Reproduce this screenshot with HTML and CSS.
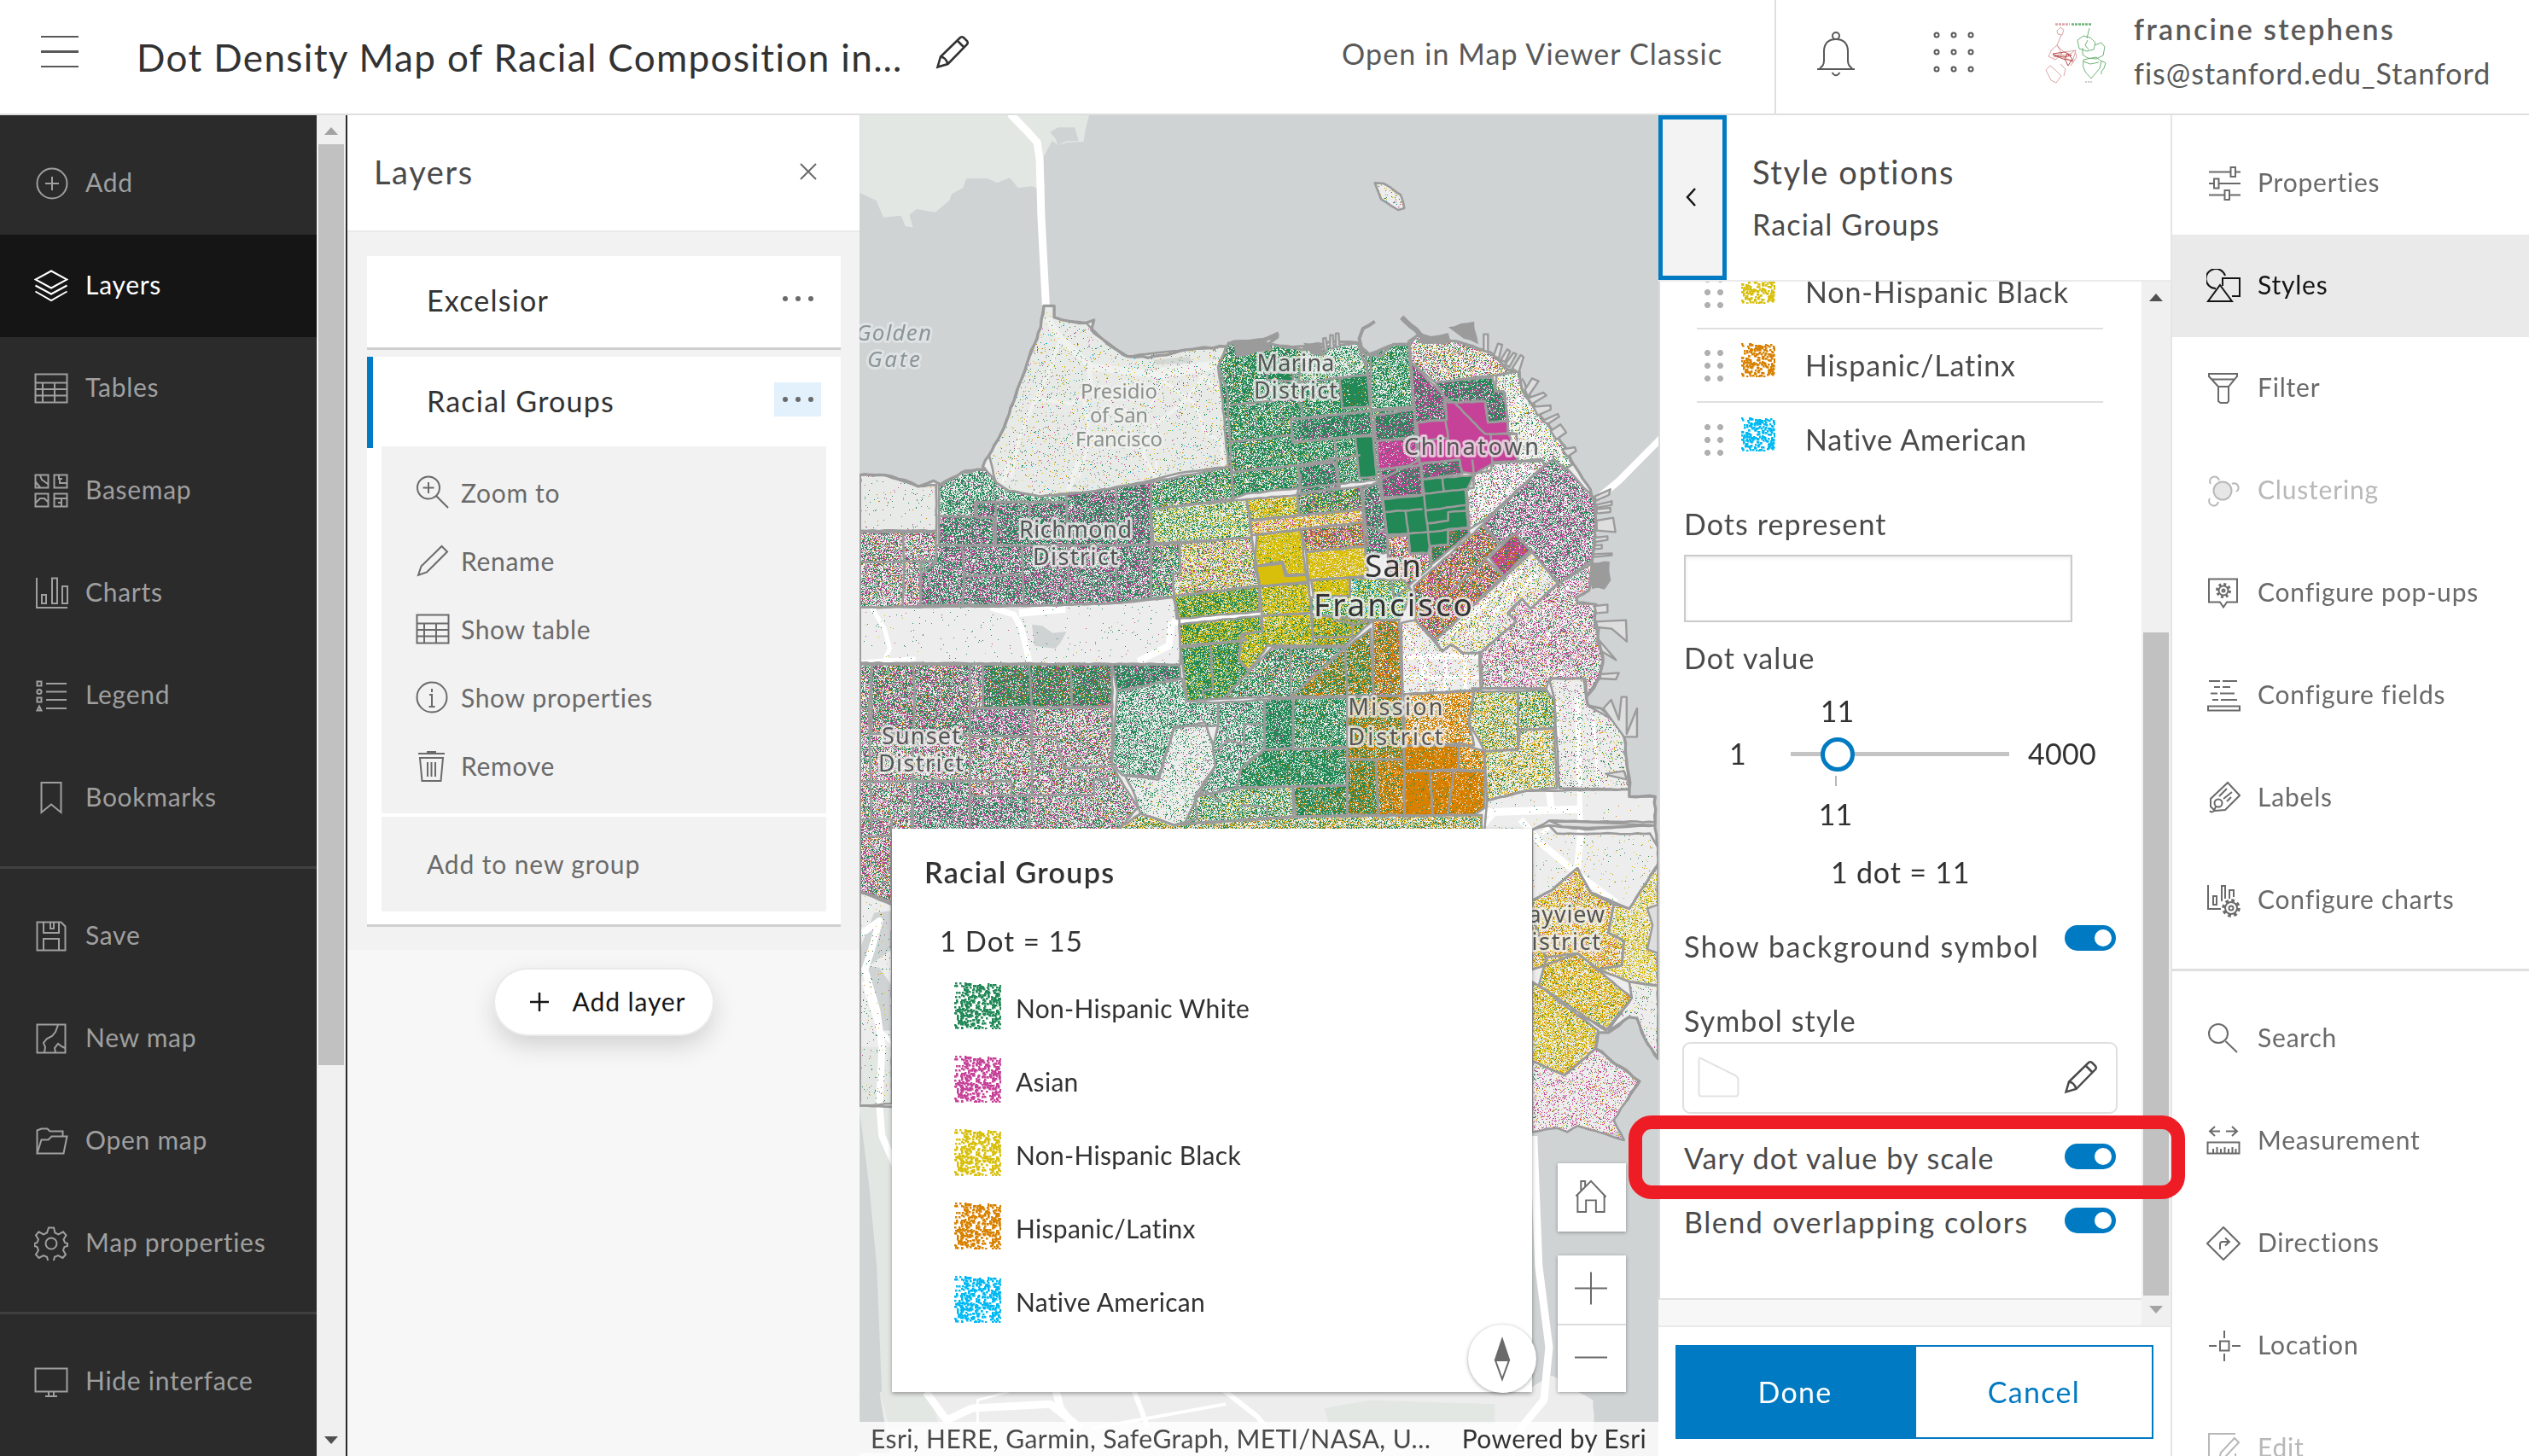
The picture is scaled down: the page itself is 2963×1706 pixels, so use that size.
FILE: index.html
```html
<!DOCTYPE html>
<html lang="en">
<head>
<meta charset="utf-8">
<title>Dot Density Map of Racial Composition in San Francisco</title>
<link rel="stylesheet" href="styles.css">
</head>
<body>
<svg class="sprite" aria-hidden="true">
  <symbol id="add" viewBox="0 0 40 40"><circle cx="21" cy="20" r="17.5"/><path d="M21 12v16M13 20h16"/></symbol>
  <symbol id="layers" viewBox="0 0 40 40"><path d="M20 2.500L38.500 12.500 20 22.500 1.500 12.500z M1.500 19.500L20 29.500 38.500 19.500 M1.500 26.500L20 37 38.500 26.500"/></symbol>
  <symbol id="table" viewBox="0 0 40 40"><path d="M1.500 3.500h37v33h-37zM1.500 13.500h37M1.500 21h37M1.500 28.500h37M10 13.500v23M24 13.500v23"/></symbol>
  <symbol id="basemap" viewBox="0 0 40 40"><path d="M1.500 1.500h15v15h-15zM23.500 1.500h15v15h-15zM1.500 23.500h15v15h-15zM23.500 23.500h15v15h-15zM7 2l2 5 7 5M2 10l5 6M29 2v4h4M38 11h-8V7M2 34l5-5h5l5 5M24 29h14M32 29v9M28 34h4"/></symbol>
  <symbol id="charts" viewBox="0 0 40 40"><path d="M3 2v35h36M9 22h5v10H9zM21 2.500h6V32h-6zM33 12h6v20h-6z"/></symbol>
  <symbol id="legend" viewBox="0 0 40 40"><path d="M3.500 3.500h5v5h-5zM3.500 22.500h5v5h-5zM14 6h24M14 15.500h24M14 25h24M14 35h24M6 32.500l2.500 5h-5z"/><circle cx="6" cy="15.500" r="2.600"/></symbol>
  <symbol id="bookmark" viewBox="0 0 40 40"><path d="M8.500 2h23v35L20 27.500 8.500 37z"/></symbol>
  <symbol id="save" viewBox="0 0 40 40"><path d="M3.500 3.500h28l5 5v28h-33zM11 4v12h18V4M23 4v7h-4V4M11 36V23h18v13"/></symbol>
  <symbol id="newmap" viewBox="0 0 40 40"><path d="M3.500 3.500h33v33h-33zM28 4l-3 8-4 5-6 3-4 5 2 5-1 6M25 36l-1-5 4-5 4 3 4 2"/></symbol>
  <symbol id="folder" viewBox="0 0 40 40"><path d="M3.500 34.500V7.500l5-2h7l3 3h15v6M3.500 34.500l5-16h8l4-4h18l-4 20z"/></symbol>
  <symbol id="gear" viewBox="0 0 40 40"><path d="M17 1.500h6l1.500 6 4 1.800 5.500-3 3.500 4-3 5 1.500 3.700 3 1v3l-3.500 1-1.500 4 3 5-3.500 4-5.500-3-4 1.800-1.500 5.700h-6l-1.500-5.700-4-1.800-5.500 3-3.500-4 3-5-1.500-4-3-1v-3l3-1 1.500-3.700-3-5 3.500-4 5.500 3 4-1.800z"/><circle cx="20" cy="20" r="6.500"/></symbol>
  <symbol id="monitor" viewBox="0 0 40 40"><path d="M1.500 4.500h37v27h-37zM17 32v4M23 32v4M13 37h14"/></symbol>
  <symbol id="zoomto" viewBox="0 0 40 40"><circle cx="15" cy="14.500" r="13"/><path d="M15 8v13M8.500 14.500h13M24 24l14 14"/></symbol>
  <symbol id="pencil" viewBox="0 0 40 40"><path d="M3 37l3.500-10.500L30.500 3l6.500 6.500L13 33.500z"/></symbol>
  <symbol id="pencil2" viewBox="0 0 40 40"><path d="M2.500 37.500l3.500-12L29 3q2-1.500 4 0l4 4q1.500 2 0 4L14.500 34zM25.500 6.500l8 8M6 25.500q6 .5 8.500 8.500"/></symbol>
  <symbol id="info" viewBox="0 0 40 40"><circle cx="19" cy="20" r="17.500"/><path d="M19 10v4M16 17h3v14M15.500 31h7"/></symbol>
  <symbol id="trash" viewBox="0 0 40 40"><path d="M3 6h31M13 4h11M5 11h27l-2.500 27h-22zM14 16v17M18.500 16v17M23 16v17"/></symbol>
  <symbol id="sliders" viewBox="0 0 40 40"><path d="M3 6.500h25M35 6.500h5M3 20h5M15 20h25M3 33.500h18M27 33.500h13M28.500 1h5.500v11h-5.500zM9 14.500h5.500v11H9zM21.500 28h5.500v11h-5.500z"/></symbol>
  <symbol id="styles" viewBox="0 0 40 40"><path d="M11 23a11.500 11.500 0 1 1 11-15M19 20v-9h20v21h-9M16 19l14 19H2z"/></symbol>
  <symbol id="filter" viewBox="0 0 40 40"><path d="M3 3h33v3L26 18v17l-1.500 2h-8L14 35V18L3 6zM6 9.500h27M13 18h13"/></symbol>
  <symbol id="cluster" viewBox="0 0 40 40"><circle cx="19" cy="20" r="10.500" class="soft"/><path d="M5 12a5.500 5.500 0 1 1 10-4M30 12a5 5 0 1 1 5 9M4 29a5.500 5.500 0 1 0 10 4"/></symbol>
  <symbol id="popup" viewBox="0 0 40 40"><path d="M3 3.500h33v27H24l-4 6-4-6H3z"/><circle cx="20" cy="17" r="7.500" stroke-dasharray="3 2.890" stroke-width="3"/><circle cx="20" cy="17" r="5.500"/><circle cx="20" cy="17" r="1.500"/></symbol>
  <symbol id="fields" viewBox="0 0 40 40"><path d="M3 3h13M19 3h17M9 10h7M19 10h9M5 17.500h8M16 17.500h17M7 25h7M17 25h19M2 32.500h37v5H2z"/></symbol>
  <symbol id="label" viewBox="0 0 40 40"><path d="M25 2l14 15-17 17-12 1L5 30V21zM15 18l9-9M20 21l10-8M24 24l5-5"/><circle cx="14" cy="26" r="4.500"/><path d="M11 30l-2 5q-3 3-5 0"/></symbol>
  <symbol id="cfgcharts" viewBox="0 0 40 40"><path d="M2 2v28h15M8 15h4v10H8zM18 21V3h4v15M27 18V8h5v8"/><circle cx="29" cy="29" r="9" stroke-dasharray="3.700 3.370" stroke-width="3.500"/><circle cx="29" cy="29" r="7"/><circle cx="29" cy="29" r="2.500"/></symbol>
  <symbol id="search" viewBox="0 0 40 40"><circle cx="14" cy="14" r="11"/><path d="M22.500 23L36 36"/></symbol>
  <symbol id="measure" viewBox="0 0 40 40"><path d="M4 8.500h12M23 8.500h12M10 3L4 8.500 10 14M30 3l6 5.500-6 5.500M1.500 21.500h37v13h-37zM8 34v-5M12.500 34v-7M17 34v-5M21.500 34v-7M26 34v-5M30.500 34v-7M34.500 34v-5"/></symbol>
  <symbol id="directions" viewBox="0 0 40 40"><path d="M20 1l19 19-19 19L1 20zM16 27v-6q0-3 3-3h7M22 13.500l5 4.500-5 4.500"/></symbol>
  <symbol id="location" viewBox="0 0 40 40"><path d="M21 2v9M21 29v9M3 20h9M30 20h10M16 14.500h10.500v11H16z"/></symbol>
  <symbol id="edit" viewBox="0 0 40 40"><path d="M34 3H3v34h31V26M15 33l2-8L33 8l5 5-16 17z"/></symbol>
</svg>

<header class="topbar">
  <div class="burger"><i></i><i></i><i></i></div>
  <h1 class="title">Dot Density Map of Racial Composition in…</h1>
  <svg class="icon title-edit"><use href="#pencil2"/></svg>
  <a class="classic">Open in Map Viewer Classic</a>
  <div class="account">
    <svg class="bell" viewBox="0 0 46 53"><circle cx="23" cy="5" r="4"/><path d="M1 44h44M4 43q5-3 5-9V22Q10 9 23 9t14 13v12q0 6 5 9M18.500 48q4.500 6.500 9 0"/></svg>
    <svg class="apps" viewBox="0 0 48 48"><g><circle cx="4" cy="4" r="2.500"/><circle cx="24" cy="4" r="2.500"/><circle cx="44" cy="4" r="2.500"/><circle cx="4" cy="24" r="2.500"/><circle cx="24" cy="24" r="2.500"/><circle cx="44" cy="24" r="2.500"/><circle cx="4" cy="44" r="2.500"/><circle cx="24" cy="44" r="2.500"/><circle cx="44" cy="44" r="2.500"/></g></svg>
    <svg class="avatar" viewBox="0 0 72 74">
      <path class="r" d="M12 3.500h17" stroke-dasharray="3 1" stroke-width="2.500"/><path class="g" d="M31 3.500h24" stroke-dasharray="3 1" stroke-width="2.500"/>
      <path class="r" d="M14 11l4-4 4 3-2 6-5-1zM19 16l-5 12-6 5-4 8 8 4 8-7-6-10 8 8 14-2-4 14-14-10-8 4 20-4 5-4 2 8-7 10M6 52l-5 5 6 12 6 3 6-8-8-8zM18 50l6 6-2 8"/>
      <path class="r hot" d="M9 38l14-2 8 4-10 2-12-3 12 5 12 2M26 38l6 6-5 8-4-8z"/>
      <path class="g" d="M52 8l-3 12M38 22l7-5 8 2 6 6-2 8-8 2-9-3zM50 22l-3 6 4 5M58 28l8-3 4 5-2 10-8 4-10-1-6-4v-8M45 45q-2 8 2 14l7 8 10-12 2-8-6-5zM66 46l5 3-2 6-3 4v3M45 47l8 3 10-2"/>
      <path d="M47 71h9" stroke="#999" stroke-dasharray="2 1"/>
    </svg>
    <div class="who"><b>francine stephens</b><span>fis@stanford.edu_Stanford</span></div>
  </div>
</header>

<div class="work">
  <nav class="rail rail-dark">
    <ul>
      <li><svg class="icon"><use href="#add"/></svg>Add</li>
      <li class="on"><svg class="icon"><use href="#layers"/></svg>Layers</li>
      <li><svg class="icon"><use href="#table"/></svg>Tables</li>
      <li><svg class="icon"><use href="#basemap"/></svg>Basemap</li>
      <li><svg class="icon"><use href="#charts"/></svg>Charts</li>
      <li><svg class="icon"><use href="#legend"/></svg>Legend</li>
      <li><svg class="icon"><use href="#bookmark"/></svg>Bookmarks</li>
    </ul>
    <ul>
      <li><svg class="icon"><use href="#save"/></svg>Save</li>
      <li><svg class="icon"><use href="#newmap"/></svg>New map</li>
      <li><svg class="icon"><use href="#folder"/></svg>Open map</li>
      <li><svg class="icon"><use href="#gear"/></svg>Map properties</li>
    </ul>
    <ul>
      <li><svg class="icon"><use href="#monitor"/></svg>Hide interface</li>
    </ul>
  </nav>
  <div class="scroll scroll-nav"><i class="up dim"></i><b></b><i class="down"></i></div>

  <section class="layers">
    <header><h2>Layers</h2><svg class="close" viewBox="0 0 20 20"><path d="M1 1l18 18M19 1L1 19"/></svg></header>
    <div class="layer-list">
      <article class="card">
        <div class="card-row"><span>Excelsior</span><span class="more"><i></i><i></i><i></i></span></div>
      </article>
      <article class="card">
        <div class="card-row picked"><span>Racial Groups</span><span class="more lit"><i></i><i></i><i></i></span></div>
        <ul class="menu">
          <li><svg class="icon"><use href="#zoomto"/></svg>Zoom to</li>
          <li><svg class="icon"><use href="#pencil"/></svg>Rename</li>
          <li><svg class="icon"><use href="#table"/></svg>Show table</li>
          <li><svg class="icon"><use href="#info"/></svg>Show properties</li>
          <li><svg class="icon"><use href="#trash"/></svg>Remove</li>
        </ul>
        <div class="regroup">Add to new group</div>
      </article>
    </div>
    <button class="add-layer"><svg viewBox="0 0 24 24"><path d="M12 1v22M1 12h22"/></svg>Add layer</button>
  </section>

  <main class="map">
    <canvas id="map" width="936" height="1571"></canvas>
    <svg class="places" viewBox="1007 135 936 1571">
      <g class="sea"><text x="1047" y="399" textLength="88">Golden</text><text x="1047" y="430" textLength="62">Gate</text></g>
      <g class="park"><text x="1311" y="467" textLength="90">Presidio</text><text x="1311" y="495" textLength="68">of San</text><text x="1311" y="523" textLength="102">Francisco</text></g>
      <g class="hood">
        <text x="1518" y="435" textLength="91">Marina</text><text x="1518" y="467" textLength="98">District</text>
        <text x="1724" y="533" textLength="158">Chinatown</text>
        <text x="1260" y="630" textLength="132">Richmond</text><text x="1260" y="662" textLength="100">District</text>
        <text x="1635" y="838" textLength="111">Mission</text><text x="1635" y="873" textLength="111">District</text>
        <text x="1079" y="872" textLength="92">Sunset</text><text x="1079" y="904" textLength="100">District</text>
        <text x="1826" y="1081" textLength="108">Bayview</text><text x="1824" y="1113" textLength="102">District</text>
      </g>
      <g class="city"><text x="1632" y="676" textLength="66">San</text><text x="1632" y="722" textLength="186">Francisco</text></g>
    </svg>
    <aside class="legend">
      <h3>Racial Groups</h3>
      <p>1 Dot = 15</p>
      <ul>
        <li><canvas class="swatch" width="55" height="55" data-group="g"></canvas>Non-Hispanic White</li>
        <li><canvas class="swatch" width="55" height="55" data-group="p"></canvas>Asian</li>
        <li><canvas class="swatch" width="55" height="55" data-group="y"></canvas>Non-Hispanic Black</li>
        <li><canvas class="swatch" width="55" height="55" data-group="o"></canvas>Hispanic/Latinx</li>
        <li><canvas class="swatch" width="55" height="55" data-group="b"></canvas>Native American</li>
      </ul>
    </aside>
    <div class="compass"><svg viewBox="0 0 20 54"><path d="M10 1l9 27H1z" fill="#6a6a6a"/><path d="M2 29h16l-8 22z" fill="#fff" stroke="#6a6a6a" stroke-width="2"/></svg></div>
    <div class="tools">
      <button><svg viewBox="0 0 40 42"><path d="M2 21L20 3l18 19M4 20v20h10V26h12v14h10V20M8 14V3h5v7"/></svg></button>
      <div class="zoom"><button><svg viewBox="0 0 40 40"><path d="M20 1v38M1 20h38"/></svg></button><button><svg viewBox="0 0 40 40"><path d="M1 20h38"/></svg></button></div>
    </div>
    <footer class="credits"><span>Esri, HERE, Garmin, SafeGraph, METI/NASA, U…</span><span>Powered by Esri</span></footer>
  </main>

  <section class="options">
    <header>
      <button class="back"><svg viewBox="0 0 14 22"><path d="M12 1L3 11l9 10"/></svg></button>
      <div class="heading"><h2>Style options</h2><p>Racial Groups</p></div>
    </header>
    <div class="options-main">
      <div class="form">
        <ul class="groups">
          <li><span class="grip"></span><canvas class="swatch" width="40" height="40" data-group="y"></canvas>Non-Hispanic Black</li>
          <li><span class="grip"></span><canvas class="swatch" width="40" height="40" data-group="o"></canvas>Hispanic/Latinx</li>
          <li><span class="grip"></span><canvas class="swatch" width="40" height="40" data-group="b"></canvas>Native American</li>
        </ul>
        <label class="dots-label">Dots represent</label>
        <div class="input"></div>
        <label class="value-label">Dot value</label>
        <div class="slider">
          <div class="cur">11</div>
          <div class="track-row"><span class="min">1</span><span class="track"><i></i></span><span class="max">4000</span></div>
          <div class="tick"></div>
          <div class="cur low">11</div>
          <div class="equals">1 dot = 11</div>
        </div>
        <div class="switch-row bg"><span>Show background symbol</span><i class="switch"></i></div>
        <label class="symbol-label">Symbol style</label>
        <div class="symbol">
          <svg class="shape" viewBox="0 0 49 48"><path d="M1.500 4q0-4 3-1.500L44 22q3.500 2 3.500 5v16q0 3.500-3 3.500h-40q-3 0-3-3.500z"/></svg>
          <svg class="icon"><use href="#pencil2"/></svg>
        </div>
        <div class="switch-row vary"><span>Vary dot value by scale</span><i class="switch"></i></div>
        <div class="switch-row blend"><span>Blend overlapping colors</span><i class="switch"></i></div>
      </div>
      <div class="scroll scroll-form"><i class="up"></i><b></b><i class="down dim"></i></div>
    </div>
    <footer><button class="done">Done</button><button class="cancel">Cancel</button></footer>
  </section>

  <nav class="rail rail-light">
    <ul>
      <li><svg class="icon"><use href="#sliders"/></svg>Properties</li>
      <li class="on"><svg class="icon"><use href="#styles"/></svg>Styles</li>
      <li><svg class="icon"><use href="#filter"/></svg>Filter</li>
      <li class="off"><svg class="icon"><use href="#cluster"/></svg>Clustering</li>
      <li><svg class="icon"><use href="#popup"/></svg>Configure pop-ups</li>
      <li><svg class="icon"><use href="#fields"/></svg>Configure fields</li>
      <li><svg class="icon"><use href="#label"/></svg>Labels</li>
      <li><svg class="icon"><use href="#cfgcharts"/></svg>Configure charts</li>
    </ul>
    <ul>
      <li><svg class="icon"><use href="#search"/></svg>Search</li>
      <li><svg class="icon"><use href="#measure"/></svg>Measurement</li>
      <li><svg class="icon"><use href="#directions"/></svg>Directions</li>
      <li><svg class="icon"><use href="#location"/></svg>Location</li>
      <li class="off"><svg class="icon"><use href="#edit"/></svg>Edit</li>
    </ul>
  </nav>
</div>
<div class="callout"></div>
<script src="map.js"></script>
</body>
</html>
```
FILE: styles.css
```css
* { box-sizing: border-box; margin: 0; padding: 0; }
body { width: 2963px; height: 1706px; overflow: hidden; position: relative; background: #fff; color: #4a4a4a; font: 400 30px/40px Lato, "Open Sans", sans-serif; letter-spacing: .72px; display: flex; flex-direction: column; }
ul { list-style: none; }
button { font: inherit; letter-spacing: inherit; color: inherit; border: 0; background: #fff; }
svg { fill: none; stroke: currentColor; stroke-width: 2; display: block; flex: none; }
canvas { display: block; flex: none; }
.sprite { position: absolute; width: 0; height: 0; }
.icon { width: 40px; height: 40px; }
.soft { fill: #e6e6e6; }

/* top bar */
.topbar { flex: none; height: 135px; border-bottom: 2px solid #dfdfdf; display: flex; align-items: center; }
.burger { width: 44px; margin: -12px 0 0 48px; display: flex; flex-direction: column; gap: 15px; }
.burger i { height: 2.5px; background: #595959; }
.title { width: 896px; margin: 1px 0 0 68px; font-size: 44px; font-weight: 400; line-height: 60px; letter-spacing: 1.38px; color: #323232; white-space: nowrap; }
.title-edit { margin: -12px 0 0 40px; color: #323232; stroke-width: 2.6; }
.classic { width: 507px; margin: -7px 0 0 436px; font-size: 34px; letter-spacing: 1.12px; color: #595959; white-space: nowrap; }
.account { height: 133px; flex: 1; border-left: 2px solid #dfdfdf; display: flex; align-items: center; color: #595959; }
.bell { width: 46px; height: 53px; margin: -7px 0 0 47px; }
.apps { width: 48px; height: 48px; margin: -12px 0 0 91px; }
.avatar { width: 72px; height: 74px; margin: -9px 0 0 83px; stroke-width: 1; }
.avatar .r { stroke: #dba3a3; } .avatar .hot { stroke: #b84848; } .avatar .g { stroke: #6db477; }
.who { margin: -14px 0 0 32px; display: flex; flex-direction: column; gap: 9px; font-size: 34px; line-height: 43px; letter-spacing: .99px; white-space: nowrap; }
.who b { letter-spacing: 2.35px; font-weight: 600; }

.work { flex: 1; min-height: 0; display: flex; }

/* tool rails */
.rail { flex: none; overflow: hidden; }
.rail ul { padding: 20px 0; }
.rail ul + ul { border-top: 3px solid #3f3f3f; padding-top: 19px; }
.rail li { height: 120px; padding-left: 40px; display: flex; align-items: center; gap: 20px; white-space: nowrap; padding-bottom: 4px; }
.rail .icon { margin-top: 3px; }
.rail-dark { width: 371px; background: #2b2b2b; color: #9f9f9f; }
.rail-dark .on { background: #151515; color: #fff; }
.rail-light { width: 420px; border-left: 2px solid #e5e5e5; color: #6a6a6a; letter-spacing: .8px; }
.rail-light ul + ul { border-color: #dfdfdf; }
.rail-light .on { background: #eaeaea; color: #151515; }
.rail-light .off { color: #b8b8b8; }

/* scrollbars */
.scroll { flex: none; width: 34px; background: #f0f0f0; display: flex; flex-direction: column; align-items: center; }
.scroll i { width: 0; height: 0; border: 8px solid transparent; }
.scroll .up { border-top: 0; border-bottom: 9px solid #505050; }
.scroll .down { border-bottom: 0; border-top: 9px solid #505050; }
.scroll .up.dim { border-bottom-color: #a3a3a3; }
.scroll .down.dim { border-top-color: #a3a3a3; }
.scroll b { width: 30px; background: #c1c1c1; }
.scroll-nav { width: 36px; border-right: 2px solid #2b2b2b; padding: 14px 0; }
.scroll-nav b { height: 1079px; margin: 11px 0 auto; }
.scroll-form { height: 1223px; padding: 14px 0 14px; }
.scroll-form b { height: 777px; margin: auto 0 12px; }

/* layers panel */
.layers { flex: none; width: 600px; background: #f7f7f7; display: flex; flex-direction: column; align-items: center; }
.layers > header { align-self: stretch; height: 137px; background: #fff; border-bottom: 2px solid #eaeaea; display: flex; align-items: center; justify-content: space-between; padding: 0 50px 3px 31px; }
h2 { font-size: 38px; font-weight: 400; letter-spacing: 1.6px; color: #4a4a4a; line-height: 48px; }
.close { width: 20px; height: 20px; color: #6a6a6a; }
.layer-list { align-self: stretch; height: 841px; padding: 28px 22px 0 23px; background: #f2f2f2; display: flex; flex-direction: column; gap: 8px; }
.card { background: #fff; border-bottom: 3px solid #cfcfcf; padding-bottom: 15px; }
.card:first-child { padding: 0; }
.card-row { height: 107px; padding: 0 23px 4px 70px; display: flex; align-items: center; justify-content: space-between; font-size: 34px; letter-spacing: 1.2px; color: #323232; }
.picked { border-left: 7px solid #007ac2; padding-left: 63px; }
.more { width: 55px; height: 40px; display: flex; align-items: center; justify-content: center; gap: 9px; margin-top: -4px; }
.more i { width: 6px; height: 6px; border-radius: 50%; background: #6a6a6a; }
.lit { background: #e2f1fb; }
.menu, .regroup { width: 521px; margin-left: 17px; background: #f2f2f2; color: #6a6a6a; }
.menu { height: 430px; margin-top: -2px; padding-top: 14px; }
.menu li { height: 80px; padding-left: 40px; display: flex; align-items: center; gap: 13px; letter-spacing: .68px; padding-bottom: 1px; }
.regroup { height: 111px; margin-top: 4px; padding-left: 53px; line-height: 110px; letter-spacing: .87px; }
.add-layer { width: 255px; height: 76px; margin-top: 23px; border-radius: 38px; color: #151515; box-shadow: 0 0 0 2px #eaeaea, 0 12px 30px rgba(0,0,0,.16); display: flex; align-items: center; justify-content: center; gap: 27px; letter-spacing: .9px; padding: 0 0 3px 9px; }
.add-layer svg { width: 24px; height: 24px; margin-top: 3px; stroke-width: 2.500; }

/* map */
.map { flex: none; width: 936px; position: relative; overflow: hidden; background: #cfd3d4; }
.places { position: absolute; inset: 0; width: 936px; height: 1571px; font-family: "Noto Sans", sans-serif; text-anchor: middle; letter-spacing: 0; }
.places text { paint-order: stroke; stroke-linejoin: round; stroke: rgba(240,240,240,.75); stroke-width: 6px; }
.sea { font-size: 26px; font-style: italic; fill: #8b9599; }
.sea text { stroke: #dfe2e3; }
.park { font-size: 24px; fill: #8a908a; }
.hood { font-size: 27px; fill: #555; }
.city { font-size: 37px; fill: #333; }
.legend { position: absolute; left: 38px; top: 836px; width: 750px; height: 660px; background: #fff; box-shadow: 0 2px 5px rgba(0,0,0,.35); padding: 31px 38px; color: #323232; }
.legend h3 { font-size: 34px; font-weight: 600; letter-spacing: 1.35px; }
.legend p { margin: 40px 0 29px 18px; font-size: 33px; letter-spacing: 1.1px; }
.legend ul { padding-left: 35px; }
.legend li { height: 55px; margin-bottom: 31px; display: flex; gap: 17px; letter-spacing: .3px; line-height: 61px; }
.compass { position: absolute; left: 713px; top: 1417px; width: 80px; height: 80px; border-radius: 50%; background: #fff; box-shadow: 0 1px 4px rgba(0,0,0,.35); display: flex; align-items: center; justify-content: center; }
.compass svg { width: 20px; height: 54px; stroke: none; }
.tools { position: absolute; left: 818px; top: 1228px; width: 80px; display: flex; flex-direction: column; gap: 28px; color: #6a6a6a; }
.tools button { width: 80px; height: 80px; display: flex; align-items: center; justify-content: center; padding: 0 2px 3px 0; }
.tools > button, .zoom { box-shadow: 0 1px 4px rgba(0,0,0,.35); }
.zoom button + button { border-top: 2px solid #dcdcdc; }
.tools svg { width: 40px; height: 41px; }
.credits { position: absolute; left: 0; bottom: 0; width: 936px; height: 40px; padding: 0 14px 0 13px; background: rgba(255,255,255,.8); display: flex; justify-content: space-between; color: #4a4a4a; letter-spacing: .4px; line-height: 39px; white-space: nowrap; }
.credits span + span { letter-spacing: .36px; color: #323232; }

/* style options */
.options { flex: none; width: 600px; display: flex; flex-direction: column; font-size: 34px; letter-spacing: 1.1px; }
.options > header { height: 195px; display: flex; border-bottom: 2px solid #eaeaea; }
.back { width: 80px; height: 193px; border: 5px solid #007ac2; background: #f3f3f3; display: flex; align-items: center; justify-content: center; color: #151515; }
.back svg { width: 14px; height: 22px; margin: -2px 0 0 -4px; stroke-width: 2.500; }
.heading { padding: 42px 0 0 30px; }
.heading p { margin-top: 18px; line-height: 40px; letter-spacing: 1.2px; }
.options-main { height: 1223px; display: flex; background: #f7f7f7; }
.form { width: 566px; height: 1193px; overflow: hidden; background: #fff; border-left: 2px solid #dadada; border-bottom: 2px solid #e2e2e2; display: flex; flex-direction: column; padding: 0 28px; }
.groups { margin: -30px 17px 0 15px; }
.groups li { height: 86px; display: flex; align-items: center; border-bottom: 2px solid #dfdfdf; letter-spacing: .88px; white-space: nowrap; }
.groups li:last-child { border-bottom: 0; }
.groups .swatch { margin: -13px 35px 0 19px; }
.grip { width: 28px; height: 44px; margin-left: 5px; background: radial-gradient(circle 3.800px, #b0b0b0 85%, transparent) 0 0 / 15px 15px; }
.form label, .form .input, .symbol { flex: none; }
.form label { height: 40px; }
.dots-label { margin-top: 36px; }
.input { width: 455px; height: 79px; margin-top: 16px; border: 2px solid #cacaca; box-shadow: inset 0 2px 4px rgba(0,0,0,.07); }
.value-label { margin-top: 22px; }
.slider { height: 252px; flex: none; color: #323232; padding-top: 22px; }
.cur { width: 359px; text-align: center; letter-spacing: 0; height: 40px; }
.track-row { height: 40px; margin-top: 10px; display: flex; align-items: center; letter-spacing: 0; }
.min { width: 72px; margin-left: 53px; }
.track { width: 256px; height: 5px; background: #c4c4c4; position: relative; }
.track i { position: absolute; left: 35px; top: -17px; width: 40px; height: 40px; border: 5px solid #007ac2; border-radius: 50%; background: #fff; }
.max { margin-left: 22px; letter-spacing: .3px; }
.tick { width: 2px; height: 12px; margin: 6px 0 13px 177px; background: #b8b8b8; }
.cur.low { width: 355px; }
.equals { margin: 28px 0 0 172px; letter-spacing: .8px; }
.switch-row { flex: none; height: 30px; width: 506px; display: flex; justify-content: space-between; white-space: nowrap; }
.switch { width: 60px; height: 30px; border-radius: 15px; background: #007ac2; }
.switch::after { content: ""; display: block; width: 20px; height: 20px; margin: 5px 0 0 35px; border-radius: 50%; background: #fff; }
.bg { margin-top: 41px; letter-spacing: 1.62px; } .bg span { margin-top: 5px; }
.symbol-label { margin-top: 62px; }
.symbol { width: 510px; height: 84px; margin: 5px 0 0 -2px; border: 2px solid #dfdfdf; border-radius: 9px; display: flex; align-items: center; justify-content: space-between; padding: 0 21px 2px 16px; }
.symbol .icon { stroke-width: 2.500; }
.shape { width: 49px; height: 48px; color: #e2e2e2; }
.vary { margin-top: 35px; letter-spacing: 1.08px; } .vary span { margin-top: -3px; }
.blend { margin-top: 45px; letter-spacing: 1.55px; } .blend span { margin-top: -3px; }
.options > footer { flex: 1; border-top: 2px solid #eaeaea; padding: 21px 20px 20px; display: flex; }
.options > footer button { flex: 1; border: 2px solid #007ac2; color: #007ac2; height: 110px; letter-spacing: 1.3px; }
.options > footer .done { background: #007ac2; color: #fff; }

.callout { position: absolute; left: 1908px; top: 1307px; width: 652px; height: 98px; border: 16px solid #ee1c24; border-radius: 27px; }
```
FILE: map.js
```js
// Colours of the five groups, keyed by the letter used in the tract mixes.
const GROUP = { g: [33, 136, 86], p: [197, 66, 152], y: [216, 191, 12], o: [216, 129, 0], b: [0, 185, 242] };

// The city was digitised on four sheets; each one has its own origin and scale.
const SHEET = {
  n: (x, y) => [1000 + x * 0.6059, 120 + y / 3],
  m: (x, y) => [1000 + x * 0.6059, 540 + y / 3],
  s: (x, y) => [1000 + x * 0.6059, 960 + y * 0.4758],
  d: (x, y) => [1500 + x / 3, 380 + y / 3]
};

let seed = 7;
function rnd() {
  seed = (seed + 0x6d2b79f5) | 0;
  let t = Math.imul(seed ^ (seed >>> 15), 1 | seed);
  t = (t + Math.imul(t ^ (t >>> 7), 61 | t)) ^ t;
  return ((t ^ (t >>> 14)) >>> 0) / 4294967296;
}

function trace(text, close, rough) {
  const path = new Path2D();
  let sheet = 'n', prev = null;
  for (const word of text.trim().split(/\s+/)) {
    if (/^[nmsd]$/.test(word)) { sheet = word; continue; }
    const [a, b] = word.split(',').map(Number);
    let [x, y] = SHEET[sheet](a, b);
    x -= 1007; y -= 135;
    if (!prev) path.moveTo(x, y);
    else {
      if (rough) {
        const n = Math.floor(Math.hypot(x - prev[0], y - prev[1]) / 7);
        for (let i = 1; i < n; i++) {
          path.lineTo(prev[0] + (x - prev[0]) * i / n + (rnd() - .5) * rough, prev[1] + (y - prev[1]) * i / n + (rnd() - .5) * rough);
        }
      }
      path.lineTo(x, y);
    }
    prev = [x, y];
  }
  if (close) path.closePath();
  return path;
}

const canvas = document.getElementById('map');
const ctx = canvas.getContext('2d');
const W = canvas.width, H = canvas.height;
const fill = (t, c, rough) => { ctx.fillStyle = c; ctx.fill(trace(t, true, rough)); };
const line = (t, c, w, rough) => { ctx.strokeStyle = c; ctx.lineWidth = w; ctx.stroke(trace(t, false, rough)); };
ctx.lineJoin = 'round';

const WATER = '#cfd3d4', LAND = '#ededed', PARK = '#e3e7e4', EDGE = '#9b9b9b';
ctx.fillStyle = WATER;
ctx.fillRect(0, 0, W, H);

// Marin headlands and the bridges
fill('n 12,40 456,40 448,100 445,138 415,140 395,150 384,135 365,200 370,310 345,295 318,300 302,265 278,282 258,267 218,268 212,300 190,322 185,345 158,386 122,375 108,395 115,440 100,435 92,398 58,404 52,380 44,345 12,318', PARK);
fill('n 380,105 395,88 428,88 435,135 412,136 395,150 390,125', WATER);
line('n 303,40 335,100 355,140 360,200 363,400 372,715', '#fff', 9);
line('n 1570,1165 1480,1330 m 1440,130', '#fff', 8);

const COAST = 'm 12,50 60,50 100,68 125,90 155,70 170,85 210,40 255,30 n 250,1280 262,1240 285,1165 310,1050 335,920 350,850 362,790 368,715 388,715 388,755 420,770 450,775 465,765 460,800 480,830 500,860 530,893 570,898 640,870 720,858 735,840 820,825 800,850 860,858 930,840 975,845 990,888 1020,892 1045,850 1075,850 d 480,40 620,60 740,100 800,160 840,165 850,230 890,290 940,350 1000,430 1020,480 1090,580 1105,620 1110,700 1100,800 1095,870 1085,935 1040,960 1045,978 1110,985 1105,1040 1120,1060 1115,1110 1135,1180 1125,1240 1075,1310 m 1420,860 1445,870 1470,910 1490,970 1495,1050 1500,1110 1500,1180 1550,1180 1550,1270 s 1556,70 1556,590 1530,540 1515,490 1500,487 1460,525 1440,525 1435,565 1520,645 1470,740 1490,790 1400,755 1380,770 1360,760 1312,770 1310,1400 1350,1370 1430,1430 1430,1570 12,1570';
const coastSeed = seed;
fill(COAST, LAND, 2.5);
fill('s 1312,771 1492,771 1492,1370 1345,1370 1330,1100', WATER);
fill('s 40,230 74,225 74,320 20,370 12,360 12,320', WATER);
fill('s 20,360 50,365 74,410 74,520 55,520 40,430', WATER);
fill('s 12,560 74,560 74,1420 12,1420', PARK);
fill('s 12,720 30,900 45,1100 55,1420 12,1420', WATER);
fill('s 12,1410 50,1410 70,1560 12,1560', WATER);
fill('s 50,1410 145,1410 165,1490 70,1500', PARK);
fill('s 910,1450 1000,1430 1240,1440 1240,1490 920,1490', PARK);
fill('n 1008,283 1025,285 1058,325 1065,372 1053,378 1020,340', LAND);

// Streets below the dots
const STREETS = [
  ['s 12,285 50,250 35,320 22,370 45,470 55,560 50,700 55,780 90,880 120,1000', 8],
  ['s 20,400 50,520 74,550', 5], ['s 140,1410 180,1480 230,1450 380,1440 440,1500', 9], ['s 390,1400 400,1450 430,1500', 9],
  ['s 540,1400 570,1500', 6], ['s 710,1400 780,1470 800,1500', 6], ['s 300,1410 240,1430 240,1490', 3], ['s 460,1500 720,1440', 4],
  ['s 1315,780 1325,1100 1345,1300 1335,1430 1290,1500 1270,1565', 9], ['s 1290,0 1330,60 1415,150 1475,205', 8], ['s 1408,0 1400,120', 8],
  ['m 1220,1235 1400,1225', 9], ['m 1400,830 1405,1270', 6], ['m 1345,1160 1350,1230', 8], ['m 1240,1240 1215,1290', 5], ['m 1345,1290 1330,1310', 5],
  ['m 1360,850 1365,1140', 3], ['m 1430,900 1440,1140', 3],
  ['m 35,515 60,590 70,660 60,700', 5], ['m 265,515 310,540 325,590 340,705', 7], ['m 320,535 410,520', 9], ['m 615,565 610,650 550,705', 8], ['m 615,568 785,540', 8], ['m 12,708 120,695', 5],
  ['n 375,760 400,830 460,930 600,960 700,925', 8], ['n 400,830 375,960 350,1050 320,1180 305,1320', 4], ['n 350,1040 420,1060 445,1030 455,1150 450,1230 435,1320', 4], ['n 455,930 460,1020', 5],
  ['n 680,960 640,1050 600,1110 570,1150 560,1240 585,1320', 4], ['n 600,980 660,1060 680,1160 710,1190 715,1290', 4], ['n 590,940 720,910', 4], ['n 670,960 715,1020', 6], ['n 570,1080 600,970', 3],
  ['m 300,0 290,80', 5], ['m 435,0 415,105', 6], ['m 585,0 585,50', 3],
  ['d 425,1060 560,1290', 3], ['d 430,1170 700,1165', 6], ['d 430,1240 700,1240', 4], ['d 500,1160 500,1290', 4], ['d 580,1160 580,1290', 4], ['d 650,1160 650,1290', 4],
  ['d 600,1090 850,860', 6], ['d 640,1110 900,880', 5], ['d 700,660 900,490', 6], ['d 680,600 860,500', 5], ['d 850,190 830,340 990,500', 5],
  ['d 730,1200 930,1000 1040,900', 4], ['d 760,1230 1000,1230', 3], ['d 900,1060 1090,1200', 4]
];
for (const [t, w] of STREETS) line(t, '#fff', w);
fill('m 345,575 365,580 385,605 412,600 400,640 390,660 350,650', WATER);

// [mix, density, outline, background?]
const TRACTS = [
  ['g5p2y1', .01, 'm 12,515 340,510 505,500 618,480 630,560 632,715 12,710'],
  ['g4y3o2p2b1', .1, 'n 1008,283 1025,285 1058,325 1065,372 1053,378 1020,340'],
  ['g5y3o2p2b1', .05, 'n 262,1240 285,1165 310,1050 335,920 350,850 362,790 368,715 388,715 388,755 420,770 450,775 480,830 530,893 640,870 720,858 705,930 722,1010 730,1280 m 640,40 560,75 470,105 415,115 360,125 300,105 275,75 265,0', PARK],
  ['g5p2o2', .02, 'm 12,50 60,50 125,90 160,85 160,245 12,245', PARK],
  ['g8p1', .5, 'm 165,85 215,35 255,30 275,75 300,105 360,125 412,118 412,145 235,145 235,195 165,195'],
  ['g5p4o1', .5, 'm 12,250 160,250 160,355 130,400 130,512 12,515'],
  ['g6p3', .72, 'm 165,195 235,195 235,145 412,145 412,118 470,105 575,75 575,297 165,297'],
  ['g6p4', .66, 'm 160,297 575,297 575,485 505,500 340,510 210,505 130,510 130,355 160,355'],
  ['g7p2y1', .6, 'm 575,297 630,290 632,390 618,400 620,475 575,485'],
  ['g8y1p1', .62, 'm 575,75 730,20 735,135 575,170'],
  ['g6y4', .48, 'm 575,170 760,135 770,270 580,290'],
  ['g30o1p1y1', .68, 'n 725,845 800,850 870,870 975,845 1000,890 1045,850 1075,850 1085,1075 1090,1260 m 1020,65 760,115 735,130 730,20 n 725,1280 710,990 705,930'],
  ['g20y1', .38, 'n 870,865 975,845 995,955 860,985', PARK],
  ['g20y1', .6, 'n 990,890 1045,850 1075,850 1082,1070 1000,1080'],
  ['g30o1', .95, 'n 940,968 995,958 1000,1068 945,1075'],
  ['g30o1', .95, 'n 800,950 850,950 850,980 800,975'],
  ['g1', 1, 'n 970,1175 1005,1172 1012,1315 978,1320'],
  ['g7p3', .8, 'm 985,100 1020,70 1030,250 990,230'],
  ['g10p2', .82, 'n 845,1115 1000,1085 1005,1168 850,1195'],
  ['g10p2', .8, 'n 860,1280 930,1265 940,1350 865,1380'],
  ['p3g4o2y1', .38, 'd 450,60 480,40 620,60 740,100 800,160 840,165 750,180 545,205 455,130', '#f6f6f6'],
  ['g4p5', .85, 'd 455,130 575,250 585,335 475,345'],
  ['g7p3', .85, 'd 545,205 745,185 755,235 785,235 800,340 730,345 720,270 590,275'],
  ['p1', 1, 'd 580,260 610,275 720,270 730,345 800,340 800,380 830,385 835,480 745,485 740,515 680,525 640,520 630,475 490,490 480,345 585,335'],
  ['p9g1', .94, 'd 340,410 480,395 490,495 345,510'],
  ['g7p3', .9, 'd 330,320 470,300 480,400 335,410'],
  ['g5p5', .92, 'd 350,510 495,495 500,600 360,610'],
  ['p5g5', .92, 'd 495,490 630,475 640,525 500,545'],
  ['g1', 1, 'd 500,545 680,530 680,575 650,580 660,715 590,725 590,775 525,780 520,805 455,805 450,740 375,740 360,615 500,600'],
  ['g7p2o1', .93, 'd 590,720 660,718 665,735 530,845 530,780 590,775'],
  ['g4p4o1', .25, 'd 680,530 745,490 920,480 930,495 715,690 665,720 655,585', '#f8f8f8'],
  ['g5p2y2', .22, 'd 760,180 840,165 850,230 890,290 1000,430 1030,490 1000,510 960,475 930,495 920,475 835,480 800,380 790,240 755,235', '#f6f6f6'],
  ['g5p5', .56, 'd 960,475 1020,520 1100,610 1110,700 1095,830 980,910 880,795 825,735 770,775 715,700 930,495', '#f4f4f4'],
  ['p4g3o3', .72, 'd 470,920 710,705 770,775 720,825 785,885 545,1110 475,1040', '#f6f6f6'],
  ['p6o2g2', .95, 'd 735,820 825,735 880,795 785,885'],
  ['y4g3p2', .22, 'd 885,800 975,910 880,1000 850,965 800,1015 830,1045 700,1155 640,1155 600,1125 570,1150 545,1110'],
  ['p5g3o1', .34, 'd 980,910 1095,840 1085,935 1040,960 1045,980 1110,985 1105,1040 1135,1190 1120,1240 1075,1310 1065,1245 945,1245 935,1280 710,1280 705,1155 830,1045 800,1015 850,965 880,1000'],
  ['o3g3p3y2', .1, 'd 425,1050 475,1040 570,1150 600,1125 640,1155 700,1155 705,1285 430,1300'],
  ['g6p3', .78, 'd 285,570 350,560 375,740 380,800 300,820'],
  ['p3g3o3', .6, 'd 375,745 450,740 455,805 520,805 530,850 440,930 400,960 380,850', '#f8f8f8'],
  ['y7g2o1', .7, 'm 760,135 858,120 862,190 768,210'],
  ['g6p2y2', .75, 'm 858,115 980,90 985,170 862,190'],
  ['y5p2g1o2', .55, 'm 768,210 985,170 990,215 770,262'],
  ['p4g3o3y1', .72, 'm 865,240 990,215 995,300 875,320'],
  ['y20g1', .85, 'm 780,260 865,242 875,400 835,405 830,360 775,370'],
  ['y20o1', .78, 'm 875,320 990,300 995,405 880,420'],
  ['y1', 1, 'm 775,370 830,355 838,400 875,400 880,430 785,440'],
  ['y8g2', .82, 'm 785,440 880,425 885,535 790,545'],
  ['y9g1', .92, 'm 885,420 960,410 960,475 890,480'],
  ['g5b1y3', .6, 'm 960,410 1065,420 1080,460 1055,560 1000,560 885,540 885,480 960,475', '#f6f6f6'],
  ['y4g3p2', .5, 'm 580,290 630,290 770,270 785,440 620,475 618,400 632,390 630,290'],
  ['g6y4', .82, 'm 620,475 785,440 785,530 625,555'],
  ['g5y5', .88, 'm 630,575 785,545 790,600 750,610 760,630 632,650'],
  ['y7g3', .8, 'm 790,545 885,535 890,650 800,650 765,740 745,700 750,610 790,600'],
  ['y5g4o1', .88, 'm 885,540 1005,560 950,650 890,650'],
  ['g8y2', .8, 'm 632,655 750,635 745,700 765,740 715,835 645,845'],
  ['g8p1o1', .6, 'm 810,655 950,655 845,830 715,835 765,740'],
  ['o4g5', .78, 'm 950,660 1000,590 1005,825 845,830'],
  ['o6g3p1', .8, 'm 1005,560 1055,560 1060,825 1005,825', '#fff'],
  ['g5p4o1', .5, 'm 12,715 500,715 500,1075 550,1220 510,1300 12,1320'],
  ['g6p4o1', .64, 'm 35,715 225,715 225,960 35,960'],
  ['g5p5', .62, 'm 225,870 345,868 345,968 225,968'],
  ['g8p2o1', .82, 'm 250,715 500,715 500,862 250,868'],
  ['g8p2', .8, 'm 500,715 630,718 632,765 510,810'],
  ['g6p4', .6, 'm 115,1125 225,1125 225,1300 115,1300'],
  ['g6p4', .6, 'm 225,1180 340,1175 340,1300 225,1300'],
  ['g9p1', .45, 'm 510,810 635,765 645,845 705,850 705,930 620,935 590,1120 520,1105 500,1060'],
  ['g8y1p1', .15, 'm 590,1110 620,940 680,920 695,1000 700,1070 660,1180 665,1260 620,1280 555,1240 545,1180 525,1105'],
  ['g9p1', .48, 'm 705,850 795,840 795,1010 750,1080 740,1150 665,1180 700,1070 695,1000 705,930'],
  ['g20p1', .78, 'm 795,840 850,835 850,1010 795,1015'],
  ['g20o1', .64, 'm 850,835 955,830 955,1005 850,1015'],
  ['g20o1', .74, 'm 750,1080 795,1015 955,1010 955,1140 740,1150'],
  ['g8o2', .78, 'm 850,1145 955,1140 955,1245 855,1250'],
  ['g7o1y1', .5, 'm 665,1180 740,1150 850,1145 850,1250 640,1275'],
  ['o5g4', .8, 'm 955,830 1060,825 1065,1050 955,1050'],
  ['o8g1', .6, 'm 1065,820 1200,810 1190,920 1200,1000 1065,1000', '#fff'],
  ['o9g1', .93, 'm 1065,1000 1170,995 1170,1085 1065,1090'],
  ['o8g1', .66, 'm 1170,990 1220,1020 1220,1090 1170,1085', '#fff'],
  ['g6o4', .86, 'm 955,1050 1010,1050 1015,1245 955,1245'],
  ['o8g2', .84, 'm 1010,1050 1065,1050 1065,1245 1015,1245'],
  ['o20g1', .98, 'm 1065,1090 1115,1090 1120,1245 1065,1250'],
  ['o15g1', .9, 'm 1115,1090 1220,1090 1220,1220 1200,1245 1120,1245'],
  ['y3g4o2', .46, 'm 1200,810 1285,810 1285,1015 1220,1020 1190,920'],
  ['g5y2o1', .5, 'm 1285,810 1340,805 1355,840 1355,940 1285,945'],
  ['y3o2g3', .38, 'm 1220,1020 1285,1015 1290,945 1355,940 1360,1150 1300,1160 1225,1195'],
  ['g4p2y2', .1, 'm 1345,765 1415,765 1420,860 1470,910 1490,970 1500,1155 1365,1150 1355,835'],
  ['y2g2o1', .008, 'm 1225,1195 1300,1160 1500,1155 1500,1180 1550,1180 1550,1270 1345,1265 1310,1300 1220,1300'],
  ['g5o3y2', .5, 'm 510,1295 555,1240 620,1280 870,1250 1215,1245 1215,1320 510,1320'],
  ['y3g2o1', .02, 's 1312,25 1345,15 1360,35 1540,35 1556,70 1556,110 1500,220 1425,180 1400,120 1350,175 1312,200'],
  ['y6o5g1p1', .5, 's 1312,200 1350,175 1400,120 1425,180 1470,210 1460,280 1490,300 1485,360 1440,370 1400,330 1312,370'],
  ['y9g1o1', .4, 's 1470,210 1500,220 1556,110 1556,410 1500,400 1440,370 1485,360 1490,300 1460,280'],
  ['y6o3g1', .56, 's 1340,340 1400,330 1505,440 1455,520 1325,410'],
  ['y7o2g1', .54, 's 1312,400 1325,410 1440,520 1435,565 1375,630 1312,595'],
  ['p6g1y1o1', .18, 's 1312,595 1375,630 1435,565 1520,645 1470,740 1490,790 1400,755 1380,770 1360,760 1312,770'],
  ['g5y2p2', .06, 's 1500,400 1556,410 1556,590 1530,540 1515,490 1500,487 1460,520 1505,440'],
  ['g4p4o1', .55, 's 12,0 74,0 74,205 12,175'],
  ['g5p2y2o1', .022, 's 12,180 74,210 74,700 12,705']
];

// Rasterise the tracts to an index picture, then throw one chance per pixel.
const index = document.createElement('canvas');
index.width = W; index.height = H;
const ix = index.getContext('2d', { willReadFrequently: true });
const outlines = TRACTS.map(([, , shape, back], i) => {
  const path = trace(shape, true, 1.2);
  if (back) { ctx.globalAlpha = .55; ctx.fillStyle = back; ctx.fill(path); ctx.globalAlpha = 1; }
  ix.fillStyle = `rgb(${i + 1},0,0)`;
  ix.fill(path);
  return path;
});
const bags = TRACTS.map(([mix]) => {
  const bag = [];
  for (const [, k, n] of mix.matchAll(/([gpyob])(\d+)/g)) for (let i = 0; i < +n; i++) bag.push(GROUP[k]);
  return bag;
});
const ids = ix.getImageData(0, 0, W, H).data;
const img = ctx.getImageData(0, 0, W, H);
for (let i = 0; i < ids.length; i += 4) {
  if (ids[i + 3] < 255 || !ids[i]) continue;
  const t = ids[i] - 1;
  if (!TRACTS[t] || rnd() > TRACTS[t][1]) continue;
  const c = bags[t][Math.floor(rnd() * bags[t].length)];
  img.data[i] = c[0]; img.data[i + 1] = c[1]; img.data[i + 2] = c[2];
}
ctx.putImageData(img, 0, 0);

ctx.strokeStyle = EDGE;
ctx.lineWidth = 2.6;
for (const p of outlines) ctx.stroke(p);

// Boundaries inside areas that share a mix
const LINES = [
  'm 238,145 238,200 270,200 272,297', 'm 340,145 340,297', 'm 412,145 415,297', 'm 508,90 508,297', 'm 275,145 275,297',
  'm 210,297 215,400 210,505', 'm 325,297 330,505', 'm 415,297 415,505', 'm 508,297 508,500', 'm 210,405 325,400', 'm 95,250 98,355 95,510', 'm 12,355 160,352',
  'n 725,1065 860,1040 865,1075', 'n 865,1060 870,1110 845,1115 850,1195', 'n 845,1115 940,1095 1085,1075', 'n 728,1195 845,1170 850,1195 1005,1168', 'n 730,1300 860,1275 930,1262', 'n 930,1180 938,1320 m 940,100', 'n 1000,890 1000,1075 1012,1320 m 1020,120', 'n 858,1275 865,1320 m 858,120', 'm 735,40 860,15 980,-20',
  'd 615,280 720,385 835,385', 'd 580,335 590,400 480,410', 'd 675,475 680,525', 'd 740,385 745,485', 'd 570,540 575,585', 'd 500,545 510,650 525,780', 'd 505,595 650,580', 'd 365,660 500,650', 'd 510,655 655,635', 'd 440,655 450,740', 'd 515,700 590,690 590,660 655,655', 'd 375,740 520,730 660,715', 'd 820,165 840,165',
  'd 590,945 720,830', 'd 670,1280 930,1280', 'm 35,715 30,870 35,1300', 'm 115,715 118,800 112,1300', 'm 225,715 225,1180', 'm 340,715 345,868 345,1175', 'm 420,715 422,862', 'm 12,870 30,870', 'm 225,870 500,865', 'm 225,968 390,970 408,1080 490,1075', 'm 12,1128 305,1125 305,1175', 'm 340,1175 465,1175 465,1120 495,1120', 'm 340,1175 340,1300', 'm 225,1180 225,1300',
  'm 690,650 695,800 675,810 680,845', 'm 845,655 845,740', 'm 845,740 845,830', 'm 950,655 955,830', 'm 960,580 1000,560', 'm 1065,1000 1065,1090', 'm 1160,1090 1150,1245', 'm 700,1020 725,980 755,1000 755,925 790,925', 'm 665,1180 680,1160 710,1200', 'm 750,1210 800,1215 800,1250', 's 1345,15 1415,25 1550,15', 's 12,705 74,708', 'd 850,190 900,300', 's 1400,480 1455,515', 's 1312,230 1340,350', 'm 885,620 965,620 965,570 930,560'
];
for (const t of LINES) line(t, EDGE, 2.6, 1);

// Shoreline and piers
seed = coastSeed;
ctx.save();
ctx.beginPath(); ctx.rect(0, 0, W, 1156); ctx.clip();
ctx.strokeStyle = EDGE; ctx.lineWidth = 3.2; ctx.stroke(trace(COAST, true, 2.5));
ctx.restore();
const PIERS = ['d 155,95 150,50 160,48 165,90', 'd 175,85 175,38 185,38 188,85', 'd 195,80 195,32 205,32 208,78', 'd 715,90 715,35 730,35 730,100', 'd 750,110 765,68 780,72 768,120', 'd 775,125 798,88 808,95 790,132', 'd 790,140 820,100 830,105 805,150', 'd 815,155 845,108 855,115 838,170', 'd 860,230 885,190 908,200 870,255', 'd 870,260 925,240 935,250 885,280', 'd 890,290 950,285 950,300 905,320', 'd 920,340 975,315 980,325 940,350', 'd 950,375 985,352 1005,380 970,405', 'd 990,440 1035,432 1040,445 1010,465', 'd 1105,605 1160,580 1155,600 1110,620', 'd 1110,635 1165,622 1165,635 1112,645', 'd 1112,650 1160,645 1160,660 1112,665', 'd 1112,690 1170,680 1178,730 1112,725', 'd 1105,750 1150,745 1150,758 1105,765', 'd 1105,778 1130,775 1130,788 1105,790', 'd 1100,808 1165,805 1165,812 1100,818', 'd 1105,990 1150,985 1150,1012 1110,1015', 'd 1110,1045 1215,1040 1218,1115 1165,1070 1115,1065', 'd 1120,1110 1180,1180 1130,1150', 'd 1125,1230 1190,1225 1180,1248 1125,1245', 'm 1450,870 1465,840 1480,910 1485,830 1495,830 1495,960 1515,870 1515,970 1490,970', 'm 1455,1100 1490,1090 1495,1120 1460,1105', 's 1556,210 1535,220 1545,260 1535,320 1556,330', 'm 1345,1265 1370,1285 1420,1290 1545,1280'];
for (const t of PIERS) { const p = trace(t, true); ctx.fillStyle = '#dedede'; ctx.fill(p); ctx.strokeStyle = EDGE; ctx.lineWidth = 2.4; ctx.stroke(p); }
for (const t of ['n 735,850 800,840 810,870 740,895', 'n 870,845 900,842 912,890 885,885', 'n 1150,790 1200,770 1208,850 1180,830', 'n 1085,830 1150,810 1155,845 1100,850', 'd 1095,838 1158,835 1162,900 1140,932 1095,930']) fill(t, EDGE, 3);
line('n 985,885 978,830 985,795 1008,770', EDGE, 4, 1);
line('n 1060,755 1105,830', EDGE, 6, 1);
line('n 730,845 790,838 822,812', EDGE, 5, 1);
fill('n 580,905 650,893 655,915 585,922', 'rgba(195,200,200,.55)');

// Symbol swatches
for (const sw of document.querySelectorAll('.swatch')) {
  const c = sw.getContext('2d');
  seed = 41;
  const [r, g, b] = GROUP[sw.dataset.group];
  const n = sw.width * sw.width * .135;
  for (let i = 0; i < n; i++) {
    const x = Math.floor(rnd() * (sw.width - 1)), y = Math.floor(rnd() * (sw.width - 1));
    c.fillStyle = `rgba(${r},${g},${b},.45)`; c.fillRect(x, y, 3, 3);
    c.fillStyle = `rgb(${r},${g},${b})`; c.fillRect(x, y, 2, 2);
  }
}
```
